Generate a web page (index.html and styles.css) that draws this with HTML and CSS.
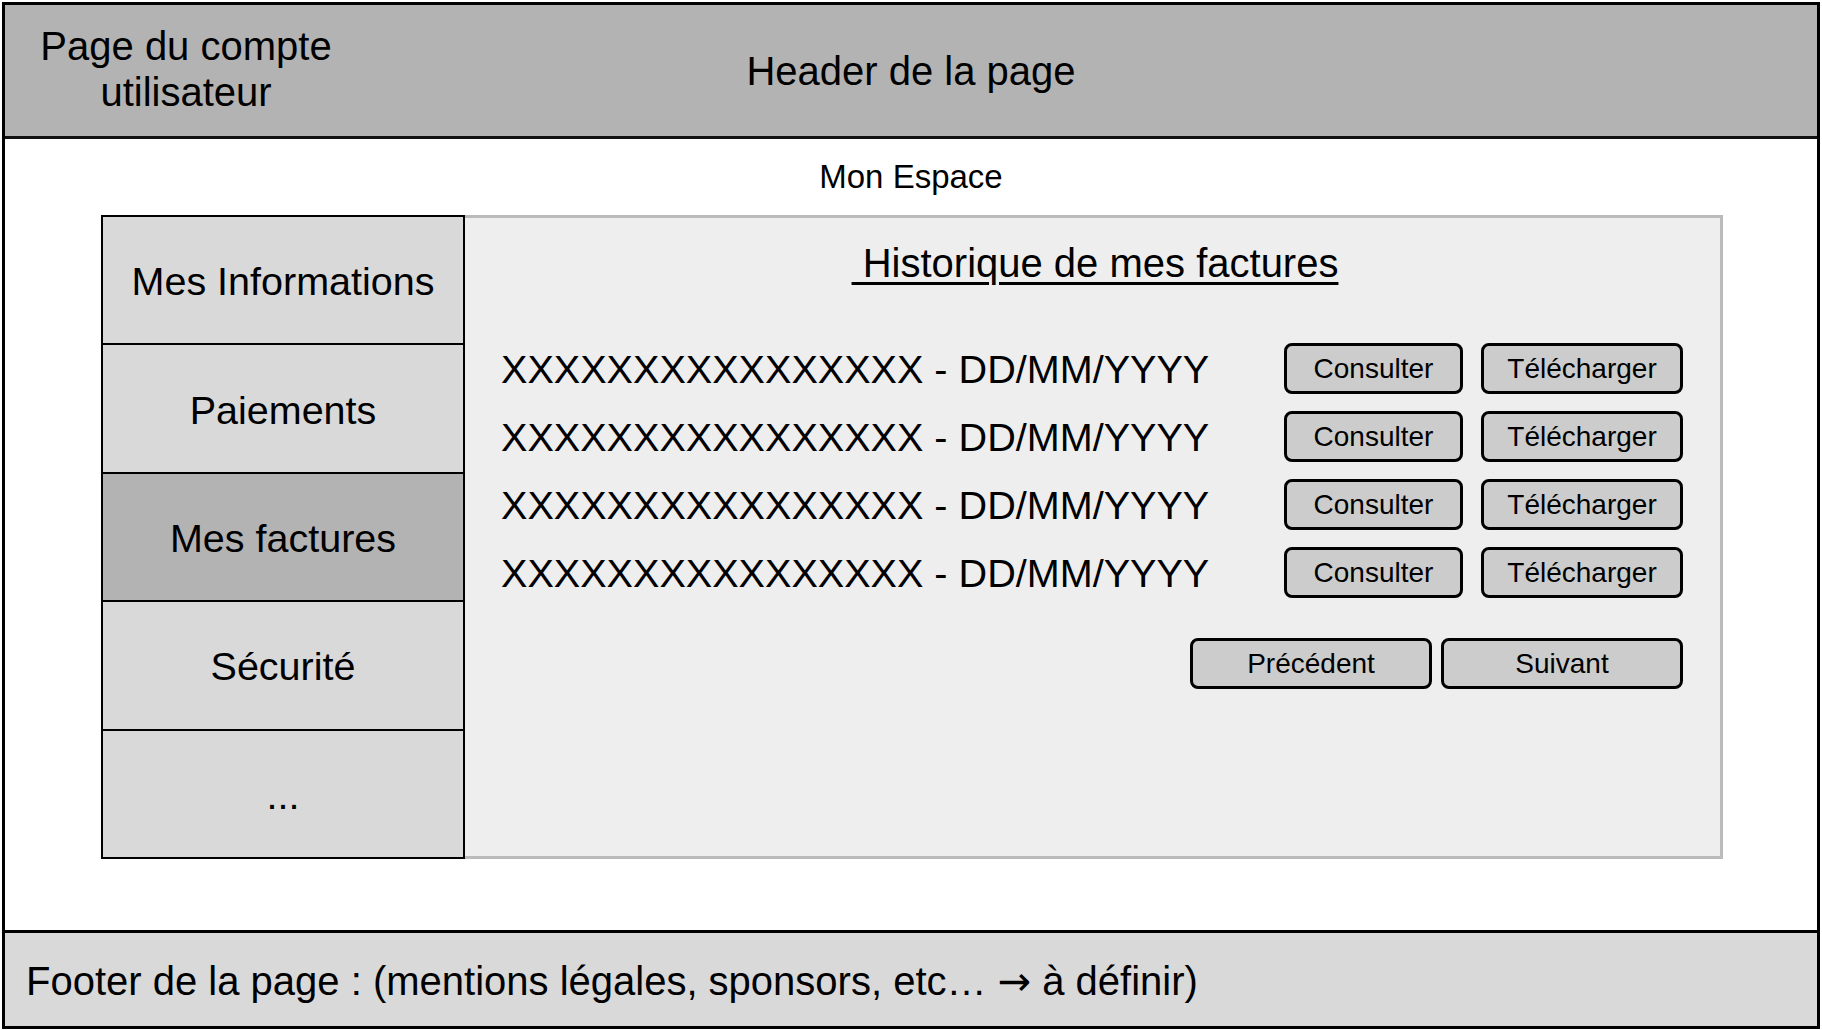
FILE: index.html
```html
<!DOCTYPE html>
<html lang="fr">
<head>
<meta charset="utf-8">
<title>Page du compte utilisateur</title>
<link rel="stylesheet" href="styles.css">
</head>
<body>
<div class="frame">
  <header class="header">
    <div class="header-left">Page du compte<br>utilisateur</div>
    <div class="header-title">Header de la page</div>
  </header>
  <main class="main">
    <div class="space-title">Mon Espace</div>
    <div class="board">
      <nav class="sidebar">
        <div class="side-item">Mes Informations</div>
        <div class="side-item">Paiements</div>
        <div class="side-item active">Mes factures</div>
        <div class="side-item">Sécurité</div>
        <div class="side-item">...</div>
      </nav>
      <section class="panel">
        <h1 class="panel-title">&nbsp;Historique de mes factures</h1>
        <div class="invoices">
          <div class="invoice">
            <span class="invoice-label">XXXXXXXXXXXXXXXX - DD/MM/YYYY</span>
            <div class="actions">
              <button class="btn btn-view">Consulter</button>
              <button class="btn btn-dl">Télécharger</button>
            </div>
          </div>
          <div class="invoice">
            <span class="invoice-label">XXXXXXXXXXXXXXXX - DD/MM/YYYY</span>
            <div class="actions">
              <button class="btn btn-view">Consulter</button>
              <button class="btn btn-dl">Télécharger</button>
            </div>
          </div>
          <div class="invoice">
            <span class="invoice-label">XXXXXXXXXXXXXXXX - DD/MM/YYYY</span>
            <div class="actions">
              <button class="btn btn-view">Consulter</button>
              <button class="btn btn-dl">Télécharger</button>
            </div>
          </div>
          <div class="invoice">
            <span class="invoice-label">XXXXXXXXXXXXXXXX - DD/MM/YYYY</span>
            <div class="actions">
              <button class="btn btn-view">Consulter</button>
              <button class="btn btn-dl">Télécharger</button>
            </div>
          </div>
        </div>
        <div class="pager">
          <button class="btn btn-page">Précédent</button>
          <button class="btn btn-page">Suivant</button>
        </div>
      </section>
    </div>
  </main>
  <footer class="footer"><span>Footer de la page : (mentions légales, sponsors, etc… <span class="arrow">→</span> à définir)</span></footer>
</div>
</body>
</html>
```

FILE: styles.css
```css
* {
  box-sizing: border-box;
}

html, body {
  margin: 0;
  padding: 0;
  background: #ffffff;
}

body {
  font-family: "Liberation Sans", Arial, Helvetica, sans-serif;
  color: #000;
}

.frame {
  margin: 2px 2px 0 2px;
  width: 1818px;
  height: 1027px;
  border: 3px solid #000;
  display: flex;
  flex-direction: column;
}

.header {
  height: 134px;
  flex: none;
  background: #b3b3b3;
  border-bottom: 3px solid #111;
  display: grid;
  grid-template-columns: 1fr;
  align-items: center;
}

.header-left,
.header-title {
  grid-row: 1;
  grid-column: 1;
  font-size: 40px;
  line-height: 46px;
}

.header-left {
  justify-self: start;
  width: 362px;
  text-align: center;
  margin-top: -3px;
}

.header-title {
  justify-self: center;
  margin-top: 1px;
}

.main {
  flex: 1;
  padding-top: 19px;
  background: #fff;
}

.space-title {
  text-align: center;
  font-size: 33px;
  line-height: 38px;
}

.board {
  margin: 19px 0 0 96px;
  width: 1622px;
  height: 644px;
  display: flex;
}

.sidebar {
  width: 364px;
  flex: none;
  border: 2px solid #000;
  display: flex;
  flex-direction: column;
}

.side-item {
  flex: 1;
  background: #d9d9d9;
  display: flex;
  align-items: center;
  justify-content: center;
  font-size: 39.5px;
  padding-top: 3px;
}

.side-item + .side-item {
  border-top: 2px solid #000;
}

.side-item.active {
  background: #b3b3b3;
}

.panel {
  flex: 1;
  background: #eeeeee;
  border: 3px solid #bbbbbb;
  border-left: none;
  padding: 22px 37px 0 36px;
  display: flex;
  flex-direction: column;
}

.panel-title {
  margin: 0 0 0 6px;
  text-align: center;
  font-weight: normal;
  font-size: 40px;
  line-height: 46px;
  text-decoration: underline;
  text-decoration-thickness: 3px;
  text-underline-offset: 5px;
}

.invoices {
  margin-top: 57px;
  display: flex;
  flex-direction: column;
  gap: 17px;
}

.invoice {
  height: 51px;
  display: flex;
  align-items: center;
  justify-content: space-between;
}

.invoice-label {
  font-size: 39.6px;
  line-height: 46px;
}

.actions {
  display: flex;
  gap: 18px;
}

.btn {
  font-family: "Liberation Sans", Arial, Helvetica, sans-serif;
  font-size: 28px;
  color: #000;
  background: #cccccc;
  border: 3px solid #000;
  border-radius: 8px;
  height: 51px;
  padding: 0;
  display: flex;
  align-items: center;
  justify-content: center;
}

.btn-view {
  width: 179px;
}

.btn-dl {
  width: 202px;
}

.pager {
  margin-top: 40px;
  display: flex;
  justify-content: flex-end;
  gap: 9px;
}

.btn-page {
  width: 242px;
  height: 51px;
}

.footer {
  height: 96px;
  flex: none;
  background: #d9d9d9;
  border-top: 3px solid #000;
  padding: 3px 0 0 21px;
  display: flex;
  align-items: center;
  font-size: 40px;
}

.arrow {
  font-family: "DejaVu Sans", sans-serif;
  font-size: 40px;
}
```
